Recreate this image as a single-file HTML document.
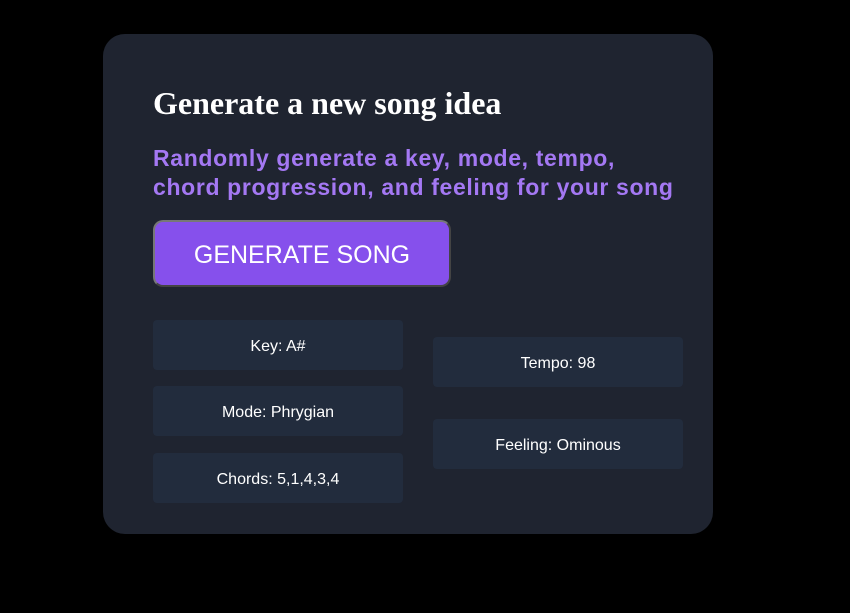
<!DOCTYPE html>
<html><head><style>
body{margin:0;background:#000;width:850px;height:613px;position:relative;font-family:"Liberation Sans",sans-serif;}
.card{position:absolute;left:103px;top:34px;width:610px;height:500px;background:#1f2430;border-radius:22px;}
h1{position:absolute;left:153px;top:86px;margin:0;font-family:"Liberation Serif",serif;font-weight:bold;font-size:32px;color:#fff;line-height:34px;white-space:nowrap;}
.sub{position:absolute;left:153px;top:144px;margin:0;font-weight:bold;font-size:23px;line-height:29px;color:#a478f3;white-space:nowrap;letter-spacing:0.65px;}
.btn{position:absolute;left:153px;top:220px;width:294px;height:63px;background:#8650ec;border:2px solid #6b6b6b;border-top-color:#777;border-left-color:#777;border-right-color:#444;border-bottom-color:#444;border-radius:10px;color:#fff;font-size:25px;display:flex;align-items:center;justify-content:center;box-sizing:border-box;width:298px;height:67px;padding-top:3px;}
.item{position:absolute;width:250px;height:50px;background:#222c3d;border-radius:4px;color:#fff;font-size:16px;display:flex;align-items:center;justify-content:center;box-sizing:border-box;padding-top:4px;}
</style></head><body>
<div class="card"></div>
<h1>Generate a new song idea</h1>
<p class="sub">Randomly generate a key, mode, tempo,<br>chord progression, and feeling for your song</p>
<div class="btn">GENERATE SONG</div>
<div class="item" style="left:153px;top:320px">Key: A#</div>
<div class="item" style="left:153px;top:386px">Mode: Phrygian</div>
<div class="item" style="left:153px;top:453px">Chords: 5,1,4,3,4</div>
<div class="item" style="left:433px;top:337px">Tempo: 98</div>
<div class="item" style="left:433px;top:419px">Feeling: Ominous</div>
</body></html>
